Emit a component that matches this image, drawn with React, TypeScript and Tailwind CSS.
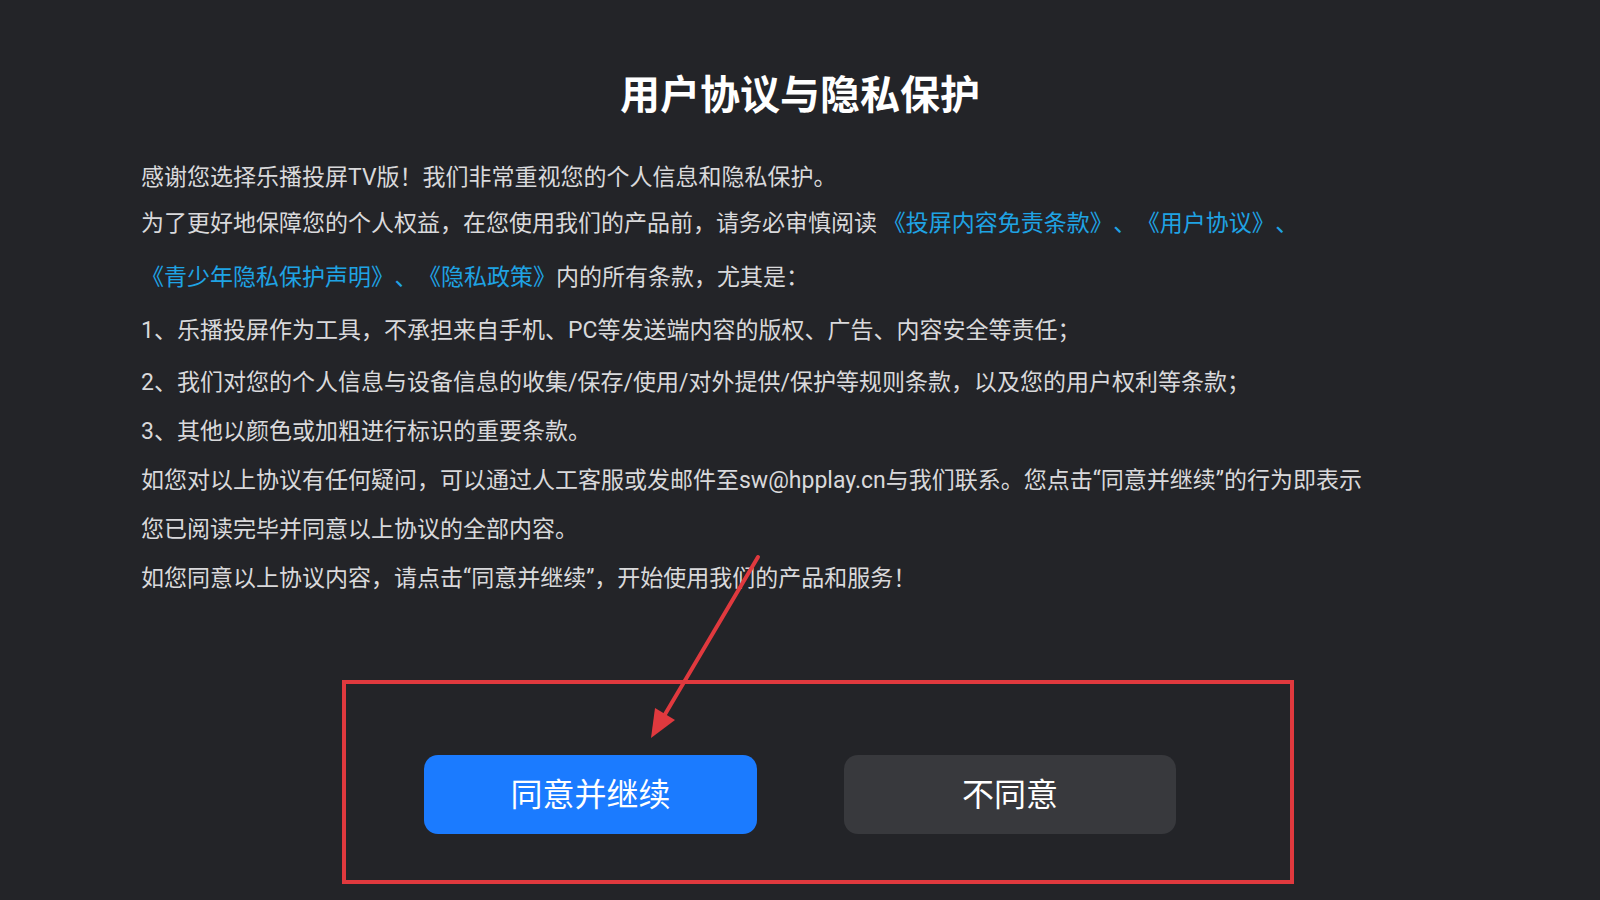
import React from 'react';

const FONT = "Roboto, 'Noto Sans CJK SC', 'Noto Sans', sans-serif";

const Link: React.FC<{ children: React.ReactNode }> = ({ children }) => (
  <span className="text-[#1fa3e4]">{children}</span>
);

// 顿号 between the links sits with some air on both sides
const Dun = () => <span className="mx-[12px]">、</span>;

export default function App() {
  return (
    <div
      className="relative w-full h-screen overflow-hidden bg-[#232428] text-[#d9d9db]"
      style={{ fontFamily: FONT }}
    >
      {/* title */}
      <h1 className="pt-[68px] text-center text-[40px] leading-[56px] font-bold text-white">
        用户协议与隐私保护
      </h1>

      {/* agreement text */}
      <div className="mt-[39px] pl-[141px] flex flex-col text-[23px] leading-[30px] whitespace-nowrap">
        <p>感谢您选择乐播投屏TV版！我们非常重视您的个人信息和隐私保护。</p>
        <p className="mt-[16px]">
          为了更好地保障您的个人权益，在您使用我们的产品前，请务必审慎阅读{' '}
          <Link>
            《投屏内容免责条款》<Dun />《用户协议》<Dun />
          </Link>
        </p>
        <p className="mt-[24px]">
          <Link>
            《青少年隐私保护声明》<Dun />《隐私政策》
          </Link>
          <span>内的所有条款，尤其是：</span>
        </p>
        <p className="mt-[23px]">1、乐播投屏作为工具，不承担来自手机、PC等发送端内容的版权、广告、内容安全等责任；</p>
        <p className="mt-[22px]">2、我们对您的个人信息与设备信息的收集/保存/使用/对外提供/保护等规则条款，以及您的用户权利等条款；</p>
        <p className="mt-[19px]">3、其他以颜色或加粗进行标识的重要条款。</p>
        <p className="mt-[19px]">如您对以上协议有任何疑问，可以通过人工客服或发邮件至sw@hpplay.cn与我们联系。您点击“同意并继续”的行为即表示</p>
        <p className="mt-[19px]">您已阅读完毕并同意以上协议的全部内容。</p>
        <p className="mt-[19px]">如您同意以上协议内容，请点击“同意并继续”，开始使用我们的产品和服务！</p>
      </div>

      {/* actions */}
      <div className="mt-[161px] flex justify-center gap-[87px]">
        <button className="w-[333px] h-[79px] rounded-[14px] bg-[#1b7bff] text-white text-[32px]">
          同意并继续
        </button>
        <button className="w-[332px] h-[79px] rounded-[14px] bg-[#38393d] text-white text-[32px]">
          不同意
        </button>
      </div>

      {/* red annotation frame */}
      <div className="absolute left-[342px] top-[680px] w-[952px] h-[204px] border-[4px] border-[#e0393e] pointer-events-none" />

      {/* red annotation arrow */}
      <svg
        className="absolute left-0 top-0 pointer-events-none"
        width="1600"
        height="900"
        viewBox="0 0 1600 900"
      >
        <line x1="758" y1="557" x2="664" y2="716" stroke="#e0393e" strokeWidth="4" strokeLinecap="round" />
        <polygon points="651,738 675,720 655,708" fill="#e0393e" />
      </svg>
    </div>
  );
}
